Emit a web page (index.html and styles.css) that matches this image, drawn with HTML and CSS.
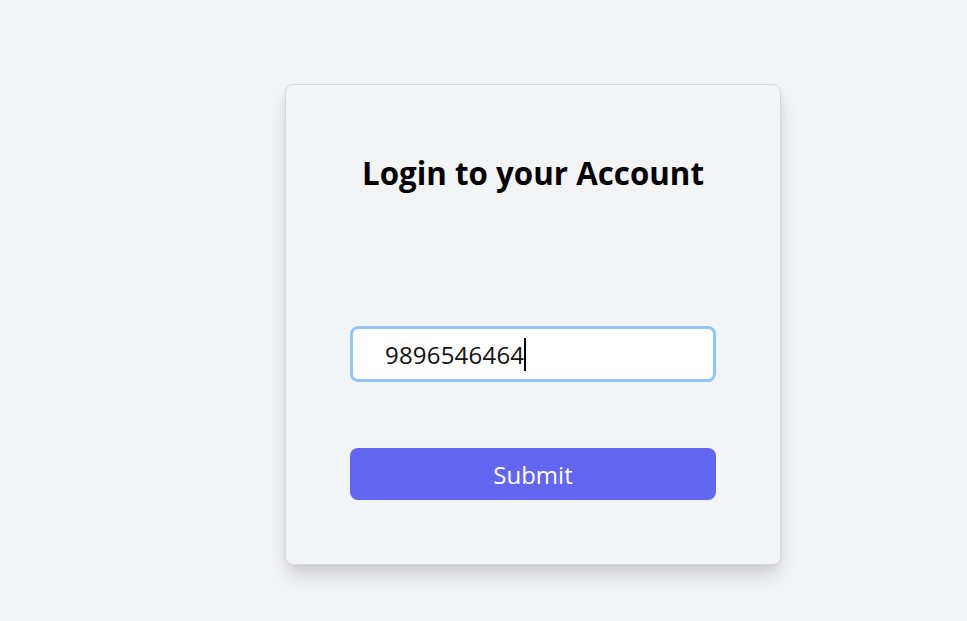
FILE: index.html
```html
<!DOCTYPE html>
<html>
<head>
<meta charset="utf-8">
<link rel="stylesheet" href="styles.css">
</head>
<body>
<div class="page">
  <form class="card">
    <h1 class="title">Login to your Account</h1>
    <div class="field">
      <span class="value">9896546464</span><span class="caret"></span>
    </div>
    <button type="button" class="submit">Submit</button>
  </form>
</div>
</body>
</html>
```
FILE: styles.css
```css
html, body {
  margin: 0;
  padding: 0;
  background: #f3f4f6;
  font-family: "Open Sans", "Noto Sans", sans-serif;
}
.page {
  min-height: 100vh;
  box-sizing: border-box;
  padding: 84px 0 0 285px;
}
.card {
  width: 366px;
  padding: 64px;
  border: 1px solid #d6d8dc;
  border-radius: 8px;
  background: #f3f4f6;
  box-shadow: 0 12px 20px -2px rgba(0,0,0,0.14), 0 4px 8px -2px rgba(0,0,0,0.08);
  display: flex;
  flex-direction: column;
}
.title {
  margin: 0;
  font-size: 31.3px;
  line-height: 36px;
  font-weight: 700;
  text-align: center;
  color: #000;
  padding-top: 6px;
}
.field {
  margin-top: 135px;
  height: 50px;
  border: 3px solid #93c5fd;
  border-radius: 8px;
  background: #fff;
  display: flex;
  align-items: center;
  padding-left: 32px;
  font-size: 24px;
  color: #111;
}
.value {
  letter-spacing: 0.2px;
}
.caret {
  display: inline-block;
  width: 2px;
  height: 33px;
  background: #000;
}
.submit {
  margin-top: 66px;
  height: 52px;
  border: none;
  border-radius: 8px;
  background: #6366f1;
  color: #fff;
  font-family: inherit;
  font-size: 24px;
  padding: 0;
}
```
